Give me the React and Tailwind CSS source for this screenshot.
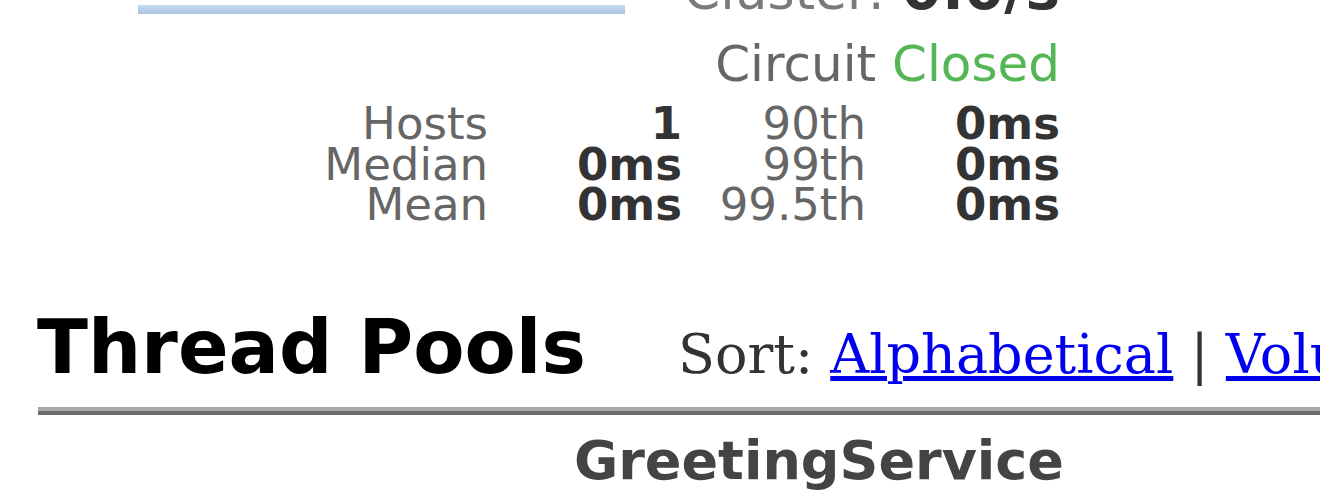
import React from "react";

const stats = [
  ["Hosts", "1", "90th", "0ms"],
  ["Median", "0ms", "99th", "0ms"],
  ["Mean", "0ms", "99.5th", "0ms"],
];

function CircuitMonitor() {
  return (
    <div className="w-[1062px]">
      {/* bottom of the sparkline + cluster rate, cut by the top edge */}
      <div className="flex items-start h-[54px] -mt-[38px]">
        <div className="mt-[43px] ml-[138px] w-[487px] h-[9px] bg-gradient-to-b from-[#c9dbea] to-[#a9c3df]" />
        <div className="ml-auto leading-[54px] whitespace-nowrap pr-[2px]">
          <span className="text-[52px] text-[#7a7a7a]">Cluster: </span>
          <span className="text-[58px] font-bold text-[#333]">0.0</span>
          <span className="text-[58px] font-bold text-[#333]">/s</span>
        </div>
      </div>

      <div className="mt-[23px] text-right text-[50px] leading-[50px] pr-[2px] whitespace-nowrap">
        <span className="text-[#666]">Circuit </span>
        <span className="text-[#55b655]">Closed</span>
      </div>

      <div className="mt-[15px] ml-auto w-fit pr-[2px] grid grid-cols-[200px_194px_184px_194px] text-[45px] leading-[40.5px] text-right whitespace-nowrap">
        {stats.map((row) => (
          <React.Fragment key={row[0]}>
            <div className="text-[#666]">{row[0]}</div>
            <div className="font-bold text-[#333]">{row[1]}</div>
            <div className="text-[#666]">{row[2]}</div>
            <div className="font-bold text-[#333]">{row[3]}</div>
          </React.Fragment>
        ))}
      </div>
    </div>
  );
}

function ThreadPools() {
  return (
    <div className="mt-[84px] pl-[37px]">
      <div className="flex items-baseline whitespace-nowrap">
        <h3 className="text-[74.7px] leading-[75px] font-bold text-black">Thread Pools</h3>
        <div className="ml-[92px] text-[54px] leading-[54px] text-[#333] font-['DejaVu_Serif',serif]">
          Sort:{" "}
          <a href="#" className="text-[#0000ee] underline">Alphabetical</a>
          {" | "}
          <a href="#" className="text-[#0000ee] underline">Volume</a>
          {" |"}
        </div>
      </div>
      <div className="mt-[22px] ml-[1px]">
        <div className="h-[4px] bg-[#a9a9a9]" />
        <div className="h-[4px] bg-[#6c6c6c]" />
      </div>
      <div className="mt-[19px] w-[1027px] text-right text-[54px] leading-[54px] font-bold text-[#444] whitespace-nowrap">
        GreetingService
      </div>
    </div>
  );
}

export default function App() {
  return (
    <div className="w-[1320px] h-[500px] overflow-hidden bg-white font-['DejaVu_Sans',sans-serif]">
      <CircuitMonitor />
      <ThreadPools />
    </div>
  );
}
